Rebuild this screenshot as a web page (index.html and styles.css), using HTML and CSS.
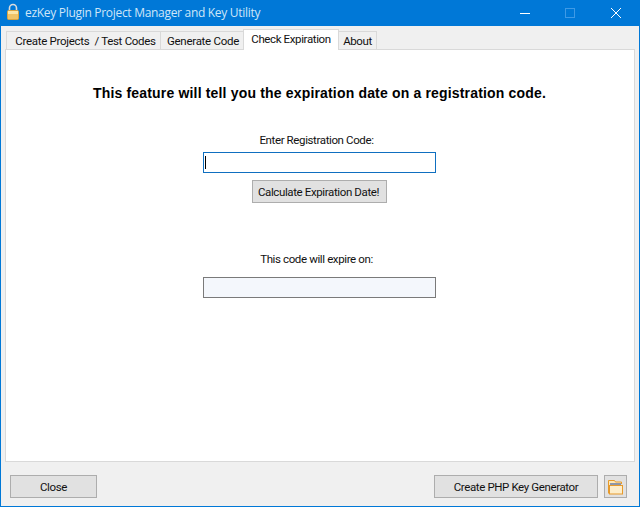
FILE: index.html
```html
<!DOCTYPE html>
<html lang="en">
<head>
<meta charset="utf-8">
<title>ezKey Plugin Project Manager and Key Utility</title>
<link rel="stylesheet" href="styles.css">
</head>
<body>
<div class="window">
  <header class="titlebar">
    <svg class="app-icon" width="16" height="20" viewBox="0 0 16 20">
      <path d="M4.500 9V6a3.500 3.500 0 0 1 7 0v3" fill="none" stroke="#dcdcdc" stroke-width="1.600"/>
      <rect x="2.500" y="8.500" width="11" height="9" rx="1" fill="#f0c468" stroke="#d9a441"/>
      <rect x="3" y="9" width="10" height="3" fill="#fbe6a8"/>
    </svg>
    <div class="title">ezKey Plugin Project Manager and Key Utility</div>
    <div class="controls">
      <svg class="ctl ctl-min" width="10" height="10" viewBox="0 0 10 10"><path d="M0 5.5H10" stroke="#fff" fill="none"/></svg>
      <svg class="ctl ctl-max" width="10" height="10" viewBox="0 0 10 10"><rect x=".5" y=".5" width="9" height="9" stroke="#3f9ae6" fill="none"/></svg>
      <svg class="ctl ctl-close" width="10" height="10" viewBox="0 0 10 10"><path d="M0 0L10 10M10 0L0 10" stroke="#fff" fill="none"/></svg>
    </div>
  </header>
  <div class="body">
    <nav class="tabs">
      <div class="tab tab-1">Create Projects&nbsp; / Test Codes</div>
      <div class="tab tab-2">Generate Code</div>
      <div class="tab tab-active">Check Expiration</div>
      <div class="tab tab-4">About</div>
    </nav>
    <main class="panel">
      <h1 class="heading">This feature will tell you the expiration date on a registration code.</h1>
      <label class="label label-enter">Enter Registration Code:</label>
      <div class="field field-input"><span class="caret"></span></div>
      <button class="btn btn-calc">Calculate Expiration Date!</button>
      <label class="label label-expire">This code will expire on:</label>
      <div class="field field-output"></div>
    </main>
    <footer class="footer">
      <button class="btn btn-close">Close</button>
      <button class="btn btn-php">Create PHP Key Generator</button>
      <button class="btn btn-folder">
        <svg width="18" height="18" viewBox="0 0 18 18">
          <path d="M1.5 15.5V2.5H7.500L8.500 4H14.500V6" fill="#fde9b8" stroke="#e79a2b"/>
          <rect x="3" y="5" width="11" height="3" fill="#8e97a8"/>
          <rect x="2.500" y="7.500" width="13" height="8.500" fill="#fdeecb" stroke="#e79a2b"/>
        </svg>
      </button>
    </footer>
  </div>
</div>
</body>
</html>
```
FILE: styles.css
```css
* { box-sizing: border-box; }
html, body { margin: 0; padding: 0; }
body { width: 640px; height: 508px; overflow: hidden; font-family: Roboto, "Liberation Sans", sans-serif; font-size: 11.5px; letter-spacing: -.38px; color: #111; }
.window { width: 640px; height: 507px; display: flex; flex-direction: column; background: #0078d7; padding: 0 1px 1px; }
.titlebar { height: 26px; display: flex; align-items: center; color: #fff; flex: none; }
.app-icon { margin-left: 4px; margin-bottom: 2px; flex: none; }
.title { margin-left: 4px; font-family: "Open Sans", sans-serif; font-size: 12px; letter-spacing: -.3px; margin-bottom: 2px; color: #cfe6f8; flex: 1; }
.controls { display: flex; align-items: center; margin-bottom: 1px; }
.ctl { display: block; }
.ctl-max { margin-left: 35px; }
.ctl-close { margin-left: 36px; margin-right: 18px; }
.body { flex: 1; background: #f0f0f0; display: flex; flex-direction: column; padding: 0 4px; min-height: 0; }
.tabs { display: flex; align-items: flex-end; height: 24px; padding-left: 1px; flex: none; margin-bottom: -1px; }
.tab { height: 19px; border: 1px solid #d9d9d9; border-bottom: 0; padding-top: 2px; text-align: center; background: #f0f0f0; white-space: nowrap; margin-right: -1px; }
.tab-1 { width: 155px; letter-spacing: -.3px; padding-left: 4px; }
.tab-2 { width: 84px; letter-spacing: -.28px; padding-left: 2px; }
.tab-active { width: 96px; height: 21px; background: #fff; position: relative; z-index: 1; padding-top: 2px; }
.tab-4 { width: 39px; }
.panel { flex: 1; background: #fff; border: 1px solid #d9d9d9; display: flex; flex-direction: column; align-items: center; padding-right: 1px; min-height: 0; }
.heading { margin: 34px 0 0; font-family: "Liberation Sans", sans-serif; font-size: 14px; line-height: 18px; font-weight: bold; color: #000; letter-spacing: .17px; white-space: nowrap; }
.label { line-height: 14px; display: block; margin-right: 6px; }
.label-enter { margin-top: 31px; }
.field { width: 233px; height: 21px; display: block; }
.field-input { margin-top: 5px; border: 1px solid #0f6fc0; background: #fff; padding: 3px 1px; }
.caret { display: block; width: 1px; height: 13px; background: #000; }
.btn { font: inherit; letter-spacing: inherit; color: inherit; background: #e1e1e1; border: 1px solid #adadad; padding: 0; display: block; white-space: nowrap; }
.btn-calc { width: 135px; height: 23px; margin-top: 7px; padding-right: 2px; }
.label-expire { margin-top: 49px; }
.field-output { margin-top: 11px; background: #f4f7fc; border: 1px solid #7a7a7a; }
.footer { height: 44px; display: flex; align-items: center; padding: 5px 8px 0 5px; flex: none; }
.btn-close { width: 87px; height: 23px; }
.btn-php { width: 164px; height: 23px; margin-left: auto; }
.btn-folder { width: 23px; height: 23px; margin-left: 6px; display: flex; align-items: center; justify-content: center; }
```
